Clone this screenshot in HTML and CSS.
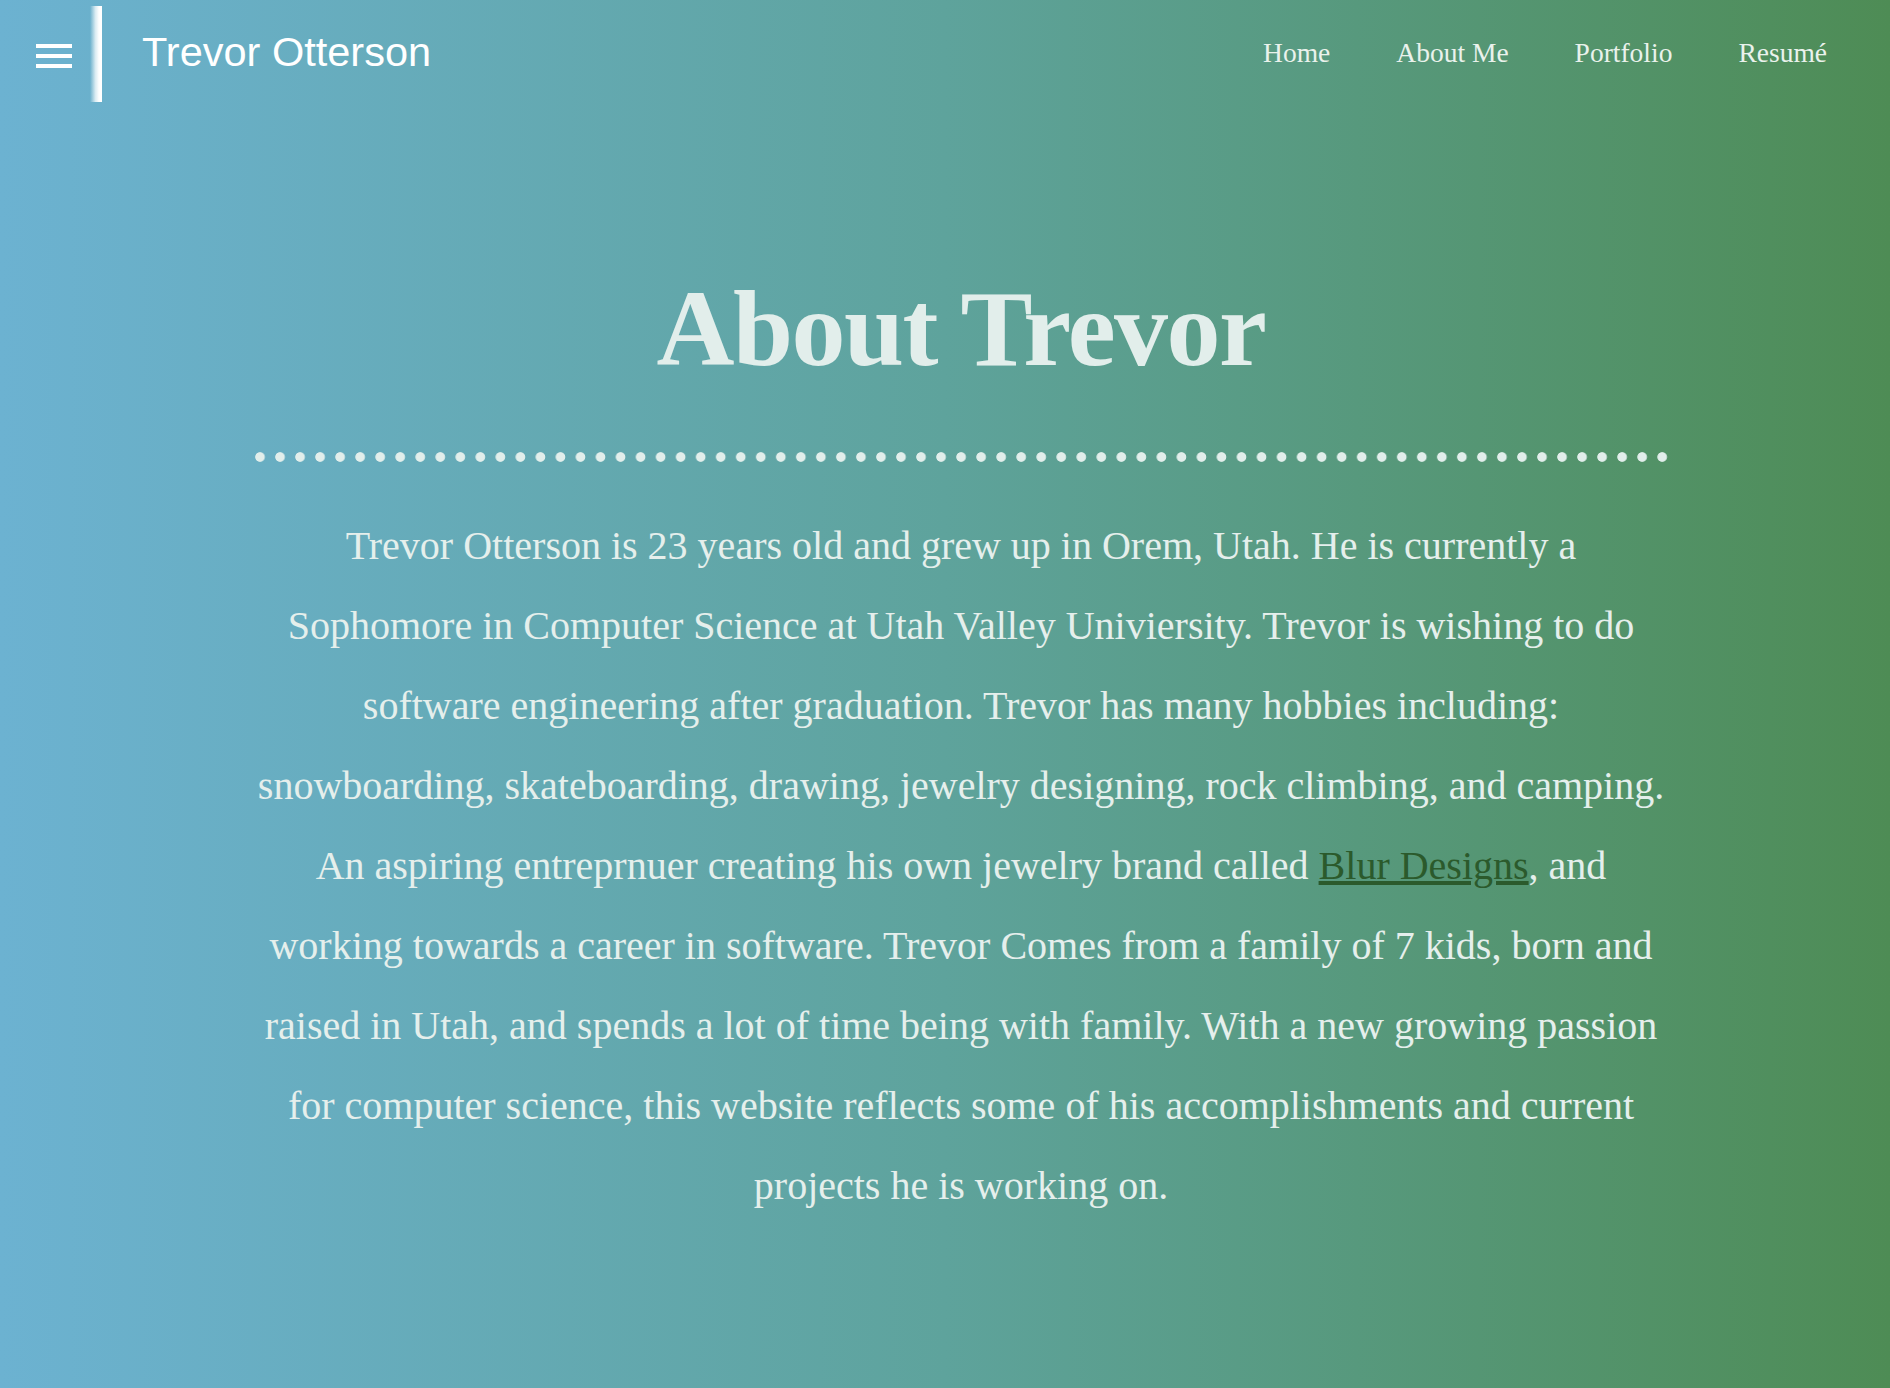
FILE: index.html
```html
<!DOCTYPE html>
<html lang="en">
<head>
<meta charset="utf-8">
<title>About Trevor</title>
<link rel="stylesheet" href="styles.css">
</head>
<body>
<header class="topbar">
  <div class="menu-btn" aria-label="Menu">
    <span></span><span></span><span></span>
  </div>
  <div class="divider"></div>
  <div class="brand">Trevor Otterson</div>
  <nav class="nav">
    <a href="#">Home</a>
    <a href="#">About Me</a>
    <a href="#">Portfolio</a>
    <a href="#">Resumé</a>
  </nav>
</header>
<main class="page">
  <section class="content">
    <h1 class="title">About Trevor</h1>
    <div class="dots"></div>
    <p class="bio">Trevor Otterson is 23 years old and grew up in Orem, Utah. He is currently a Sophomore in Computer Science at Utah Valley Univiersity. Trevor is wishing to do software engineering after graduation. Trevor has many hobbies including: snowboarding, skateboarding, drawing, jewelry designing, rock climbing, and camping. An aspiring entreprnuer creating his own jewelry brand called <a href="#" class="bio-link">Blur Designs</a>, and working towards a career in software. Trevor Comes from a family of 7 kids, born and raised in Utah, and spends a lot of time being with family. With a new growing passion for computer science, this website reflects some of his accomplishments and current projects he is working on.</p>
  </section>
</main>
</body>
</html>
```
FILE: styles.css
```css
html, body {
  margin: 0;
  padding: 0;
}

body {
  min-height: 1388px;
  background: linear-gradient(to right, #6cb2d1 0%, #5ea39c 50%, #4e8c55 100%);
  font-family: "Liberation Serif", "Times New Roman", serif;
  color: #e5efec;
}

.topbar {
  display: flex;
  align-items: center;
  height: 108px;
  padding: 0 63px 0 36px;
}

.menu-btn {
  display: flex;
  flex-direction: column;
  gap: 6px;
  width: 36px;
  margin-top: 4px;
}

.menu-btn span {
  display: block;
  height: 4px;
  background: #ffffff;
}

.divider {
  width: 12px;
  height: 96px;
  margin-left: 18px;
  background: linear-gradient(to right, rgba(255, 255, 255, 0) 0%, rgba(255, 255, 255, 0.75) 45%, #ffffff 75%);
}

.brand {
  margin-left: 40px;
  padding-bottom: 5px;
  font-family: "Liberation Sans", Arial, sans-serif;
  font-size: 41.5px;
  color: #ffffff;
}

.nav {
  margin-left: auto;
  padding-bottom: 2px;
  display: flex;
  gap: 66px;
}

.nav a {
  font-size: 27.5px;
  color: #eaf2ec;
  text-decoration: none;
}

.page {
  padding-left: 32px;
}

.content {
  width: 1413px;
  margin: 0 auto;
  text-align: center;
}

.title {
  margin: 167px 0 0;
  font-size: 108px;
  line-height: 108px;
  font-weight: bold;
  letter-spacing: -1.5px;
  color: #e2eeeb;
}

.dots {
  height: 10px;
  margin-top: 69px;
  background-image: radial-gradient(circle at 5px 5px, #e2eeeb 4.4px, rgba(226, 238, 235, 0) 5.2px);
  background-size: 20.04px 10px;
  background-repeat: repeat-x;
}

.bio {
  margin: 44px 0 0;
  font-size: 40px;
  line-height: 80px;
  color: #e5efec;
}

.bio-link {
  color: #2b5a2c;
  text-decoration: underline;
}
```
